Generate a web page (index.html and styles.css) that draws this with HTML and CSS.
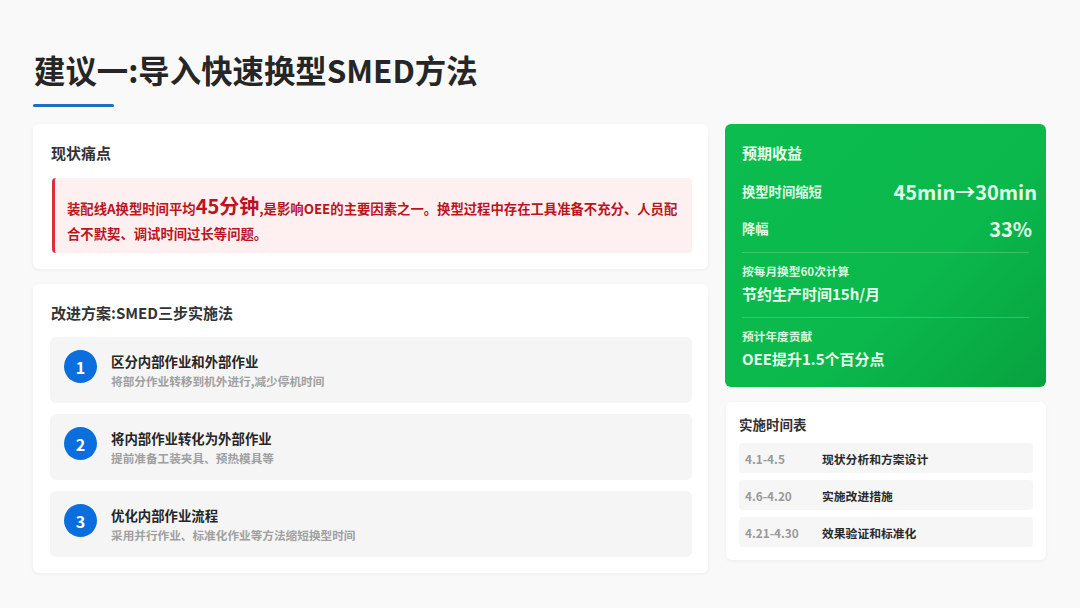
FILE: index.html
```html
<!DOCTYPE html>
<html lang="zh">
<head>
<meta charset="utf-8">
<title>建议一</title>
<link rel="stylesheet" href="styles.css">
</head>
<body>
<main class="page">
  <header class="head">
    <h1 class="title">建议一:导入快速换型SMED方法</h1>
    <div class="rule"></div>
  </header>
  <div class="columns">
    <div class="col-left">
      <section class="card card-pain">
        <h2 class="card-title">现状痛点</h2>
        <div class="alert">
          <p class="alert-text">装配线A换型时间平均<span class="alert-big">45分钟</span>,是影响OEE的主要因素之一。换型过程中存在工具准备不充分、人员配合不默契、调试时间过长等问题。</p>
        </div>
      </section>
      <section class="card card-plan">
        <h2 class="card-title">改进方案:SMED三步实施法</h2>
        <div class="steps">
          <div class="step">
            <div class="num">1</div>
            <div class="step-body">
              <div class="step-title">区分内部作业和外部作业</div>
              <div class="step-desc">将部分作业转移到机外进行,减少停机时间</div>
            </div>
          </div>
          <div class="step">
            <div class="num">2</div>
            <div class="step-body">
              <div class="step-title">将内部作业转化为外部作业</div>
              <div class="step-desc">提前准备工装夹具、预热模具等</div>
            </div>
          </div>
          <div class="step">
            <div class="num">3</div>
            <div class="step-body">
              <div class="step-title">优化内部作业流程</div>
              <div class="step-desc">采用并行作业、标准化作业等方法缩短换型时间</div>
            </div>
          </div>
        </div>
      </section>
    </div>
    <div class="col-right">
      <section class="benefit">
        <h2 class="benefit-title">预期收益</h2>
        <div class="kv kv-first"><span class="kv-label">换型时间缩短</span><span class="kv-value">45min→30min</span></div>
        <div class="kv kv-second"><span class="kv-label">降幅</span><span class="kv-value kv-pct">33%</span></div>
        <div class="note note-first">
          <div class="note-label">按每月换型60次计算</div>
          <div class="note-value">节约生产时间15h/月</div>
        </div>
        <div class="note">
          <div class="note-label">预计年度贡献</div>
          <div class="note-value">OEE提升1.5个百分点</div>
        </div>
      </section>
      <section class="card card-time">
        <h2 class="time-title">实施时间表</h2>
        <div class="rows">
          <div class="row"><span class="row-date">4.1-4.5</span><span class="row-text">现状分析和方案设计</span></div>
          <div class="row"><span class="row-date">4.6-4.20</span><span class="row-text">实施改进措施</span></div>
          <div class="row"><span class="row-date">4.21-4.30</span><span class="row-text">效果验证和标准化</span></div>
        </div>
      </section>
    </div>
  </div>
</main>
</body>
</html>
```
FILE: styles.css
```css
* { box-sizing: border-box; margin: 0; padding: 0; }
html, body { width: 1080px; height: 608px; overflow: hidden; }
body {
  background: #f9f9f9;
  color: #222;
  font-family: "Noto Sans CJK SC", "Noto Sans", sans-serif;
}
.page { padding: 47px 34px 0 33px; }
.head { height: 77px; }
.title { font-size: 31.4px; font-weight: 700; line-height: 46px; color: #262626; padding-left: 1px; }
.rule { width: 81px; height: 3px; margin-top: 11px; background: #1a6fc4; border-radius: 2px; }
.columns { display: grid; grid-template-columns: 675px 321px; column-gap: 17px; }
.col-left, .col-right { display: flex; flex-direction: column; gap: 15px; }
.card {
  background: #fff;
  border-radius: 6px;
  box-shadow: 0 1px 4px rgba(0, 0, 0, 0.05);
}
.card-title { font-size: 15px; font-weight: 700; line-height: 20px; color: #333; }
.card-pain { height: 145px; padding: 19px 16px 0 18px; }
.alert {
  height: 75px;
  margin-top: 15px;
  margin-left: 1px;
  padding: 8px 4px 0 12px;
  display: flex;
  align-items: center;
  background: #fef0f0;
  border-left: 3px solid #d9303c;
  border-radius: 4px;
}
.alert-text { font-size: 13.35px; font-weight: 700; line-height: 25px; color: #bb1420; }
.alert-big { font-size: 20px; line-height: 25px; }
.card-plan { height: 289px; padding: 19px 16px 0 18px; }
.steps { display: flex; flex-direction: column; gap: 11px; margin: 14px 0 0 -1px; }
.step {
  height: 66px;
  display: flex;
  align-items: center;
  gap: 14px;
  padding-left: 14px;
  background: #f5f5f5;
  border-radius: 6px;
}
.num {
  width: 33px;
  height: 33px;
  flex: none;
  align-self: flex-start;
  margin-top: 13px;
  display: flex;
  align-items: center;
  justify-content: center;
  border-radius: 50%;
  background: #0a6fdc;
  color: #fff;
  font-size: 16px;
  font-weight: 700;
}
.step-title { font-size: 13.4px; font-weight: 700; line-height: 19px; color: #262626; }
.step-desc { font-size: 11.65px; font-weight: 700; line-height: 16px; margin-top: 2px; color: #a0a0a0; }
.benefit {
  height: 263px;
  padding: 19px 9px 0 17px;
  border-radius: 6px;
  background: linear-gradient(135deg, #0cbc4e 0%, #0ab84c 60%, #07a23f 100%);
  color: #fff;
}
.benefit-title { font-size: 15px; font-weight: 700; line-height: 20px; color: #eafff0; }
.kv { display: flex; justify-content: space-between; align-items: center; }
.kv-first { margin-top: 13px; height: 30px; }
.kv-second { margin-top: 7px; height: 30px; padding-right: 5px; }
.kv-label { font-size: 13.3px; font-weight: 700; color: #e2fbe9; }
.kv-value { font-size: 20px; font-weight: 700; color: #e2fbe9; }
.note { margin-right: 8px; padding-top: 10px; border-top: 1px solid rgba(255, 255, 255, 0.2); height: 65px; }
.note-first { margin-top: 9px; }
.note-label { font-size: 11.7px; font-weight: 700; line-height: 16px; color: #d8f8e2; }
.note-value { font-size: 15px; font-weight: 700; line-height: 20px; margin-top: 5px; color: #e6fbec; }
.card-time { height: 158px; padding: 13px 13px 0 13px; margin-left: 1px; }
.time-title { font-size: 13.5px; font-weight: 700; line-height: 19px; color: #333; }
.rows { display: flex; flex-direction: column; gap: 7px; margin-top: 9px; }
.row {
  height: 30px;
  display: flex;
  align-items: center;
  padding-left: 6px;
  background: #f6f6f6;
  border-radius: 4px;
  font-size: 11.8px;
  font-weight: 700;
}
.row-date { width: 77px; color: #9a9a9a; }
.row-text { color: #2a2a2a; }
```
